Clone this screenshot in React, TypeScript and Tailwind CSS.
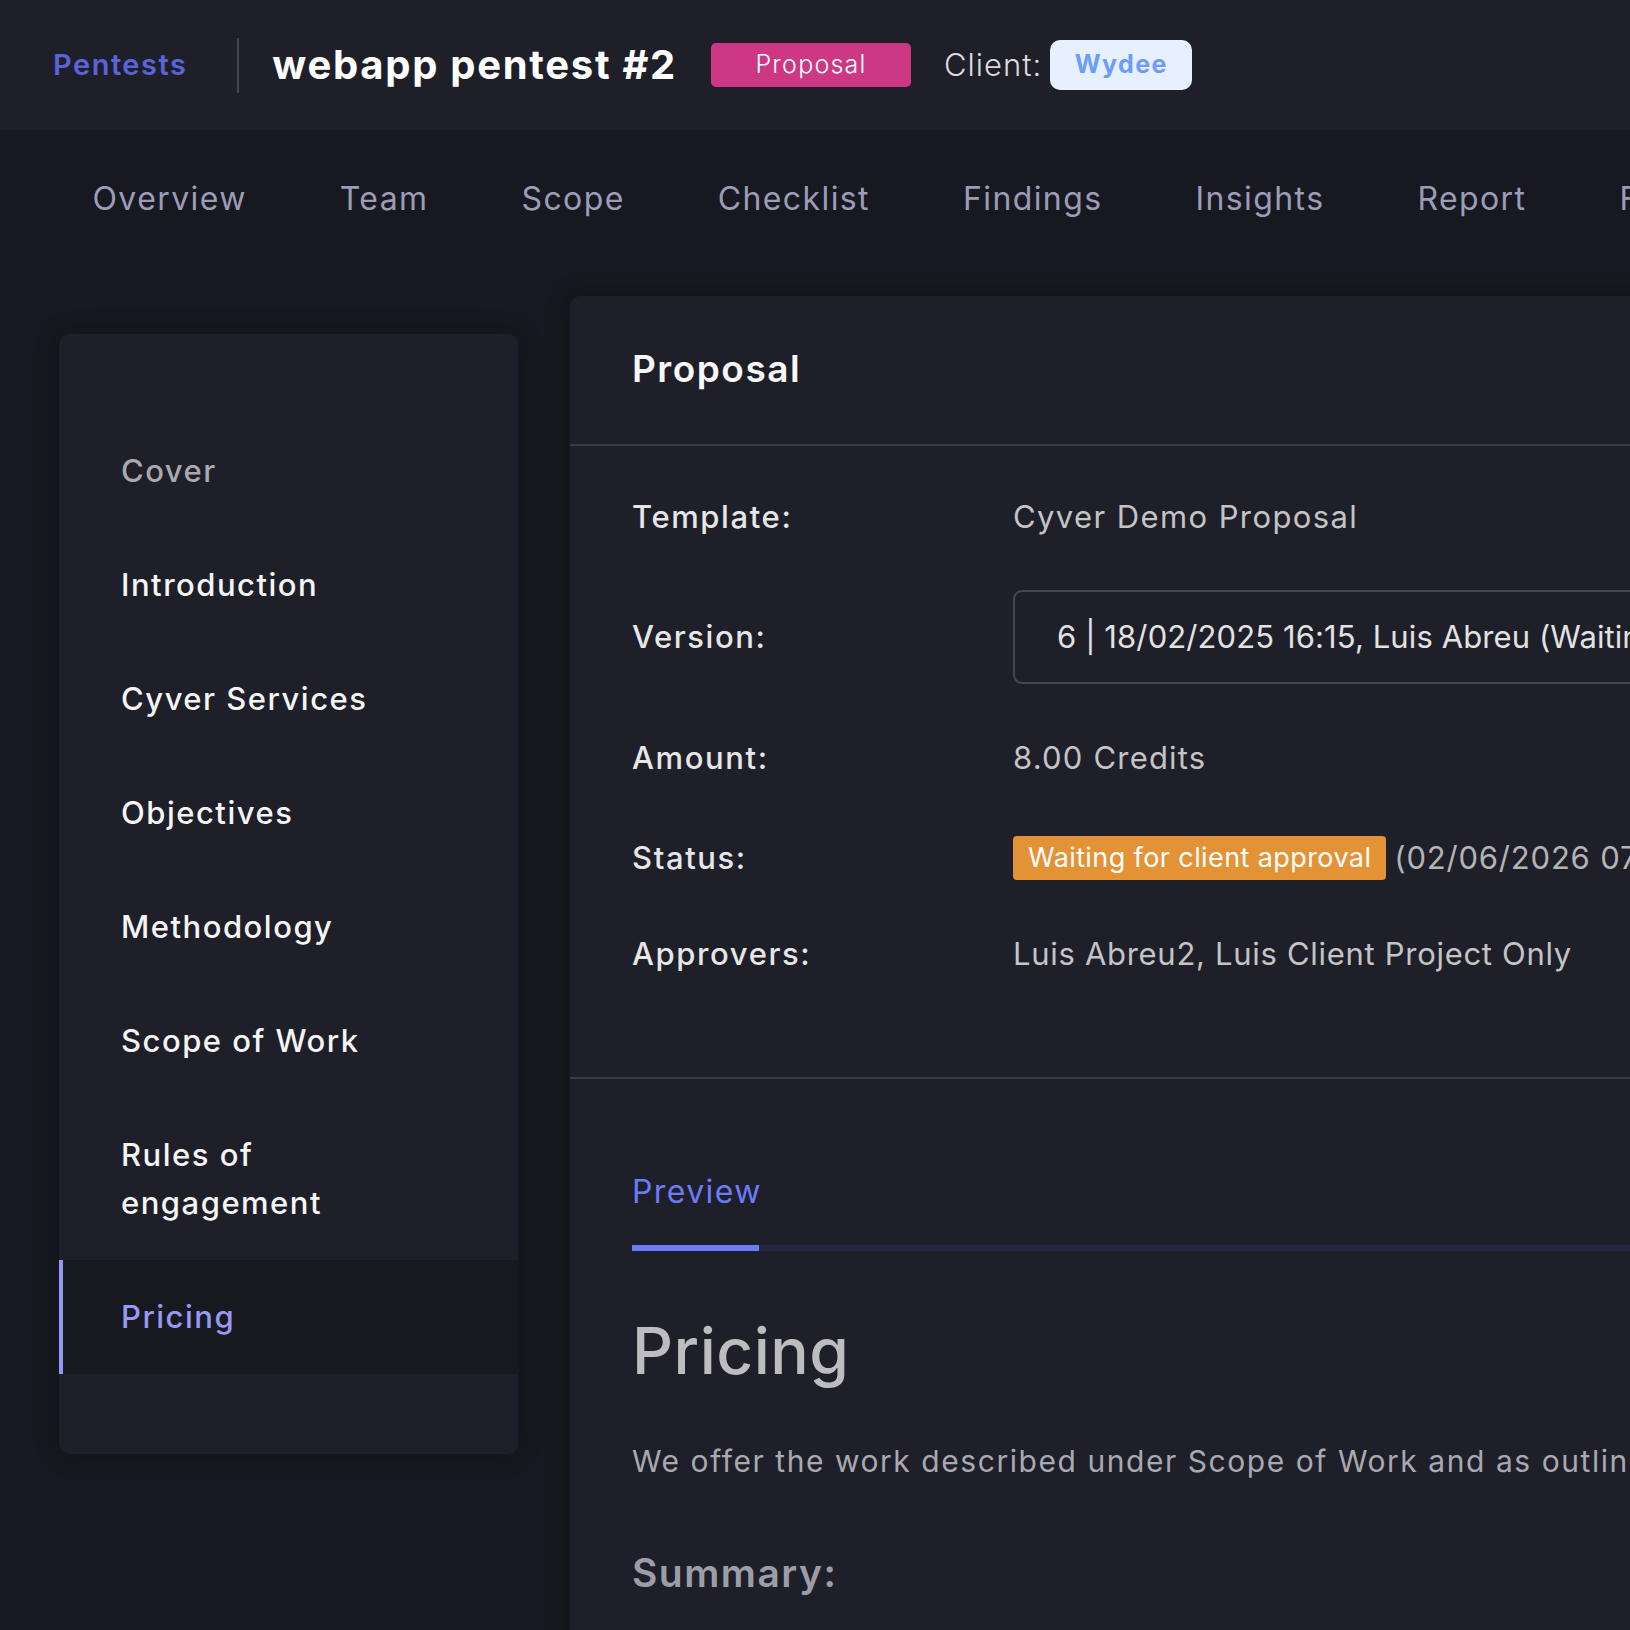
import { useState } from 'react'

const tabs = ['Overview', 'Team', 'Scope', 'Checklist', 'Findings', 'Insights', 'Report', 'Files']

const sections = [
  'Cover',
  'Introduction',
  'Cyver Services',
  'Objectives',
  'Methodology',
  'Scope of Work',
  'Rules of engagement',
  'Pricing',
]

export default function App() {
  const [active, setActive] = useState('Pricing')

  return (
    <div className="h-screen overflow-hidden bg-[#181820] font-['Inter','Noto_Sans',sans-serif] text-white">
      <header className="flex h-[130px] items-center whitespace-nowrap bg-[#1f1f2a] pl-[53px]">
        <span className="text-[29px] font-semibold tracking-[1.5px] text-[#5b63da]">Pentests</span>
        <div className="ml-[50px] h-[55px] w-[2px] bg-[#464654]" />
        <h1 className="ml-[33px] text-[40px] font-bold tracking-[1.7px]">webapp pentest #2</h1>
        <span className="ml-[34px] flex h-[44px] w-[200px] items-center justify-center rounded-[5px] bg-[#cd3784] text-[25px] font-light tracking-[1.2px]">
          Proposal
        </span>
        <span className="ml-[33px] text-[31px] font-light tracking-[1px] text-[#dcdcdc]">Client:</span>
        <span className="ml-[8px] flex h-[50px] w-[142px] items-center justify-center rounded-[10px] bg-[#e7f0ff] text-[25px] font-bold tracking-[1.4px] text-[#6c9cff]">
          Wydee
        </span>
      </header>

      <nav className="flex h-[166px] items-start whitespace-nowrap pl-[46px] pt-[45px]">
        {tabs.map((t) => (
          <button key={t} className="px-[46.5px] text-[32px] tracking-[1.4px] text-[#9b9db8]">
            {t}
          </button>
        ))}
      </nav>

      <div className="flex items-start pl-[59px]">
        <aside className="mt-[38px] w-[459px] shrink-0 rounded-[10px] bg-[#1f1f2a] py-[80px] shadow-[0_0_24px_rgba(0,0,0,0.25)]">
          {sections.map((s) => {
            const on = s === active
            return (
              <button
                key={s}
                onClick={() => setActive(s)}
                className={
                  'block w-full border-l-4 py-[33px] pl-[58px] pr-[100px] text-left text-[31px] font-medium leading-[48px] tracking-[1.5px] ' +
                  (on
                    ? 'border-[#9597f4] bg-[#18181f] text-[#9799f5]'
                    : s === 'Cover'
                      ? 'border-transparent text-[#a9a9b0]'
                      : 'border-transparent text-[#f5f5f5]')
                }
              >
                {s}
              </button>
            )
          })}
        </aside>

        <main className="ml-[52px] h-[1400px] flex-1 whitespace-nowrap rounded-tl-[10px] bg-[#1f1f2a] shadow-[0_0_24px_rgba(0,0,0,0.25)]">
          <div className="flex h-[150px] items-center border-b-2 border-[#393947] pl-[62px]">
            <h2 className="-mt-[3px] text-[37px] font-semibold tracking-[1.5px] text-[#f7f7f7]">Proposal</h2>
          </div>

          <div className="flex flex-col border-b-2 border-[#393947] pb-[100px] pl-[62px] pt-[48px] text-[31px]">
            <div className="flex h-[46px] items-center">
              <span className="w-[381px] font-medium tracking-[1.6px] text-[#e6e6e6]">Template:</span>
              <span className="tracking-[1.4px] text-[#c4c4c4]">Cyver Demo Proposal</span>
            </div>
            <div className="mt-[50px] flex h-[94px] items-center">
              <span className="w-[381px] font-medium tracking-[1.6px] text-[#e6e6e6]">Version:</span>
              <div className="flex h-[94px] w-[900px] items-center rounded-[9px] border-2 border-[#454555] pl-[42px] tracking-[0.1px] text-[#e2e2e2]">
                6 | 18/02/2025 16:15, Luis Abreu (Waiting for client approval)
              </div>
            </div>
            <div className="mt-[51px] flex h-[46px] items-center">
              <span className="w-[381px] font-medium tracking-[1.6px] text-[#e6e6e6]">Amount:</span>
              <span className="tracking-[1.2px] text-[#c4c4c4]">8.00 Credits</span>
            </div>
            <div className="mt-[55px] flex h-[44px] items-center">
              <span className="w-[381px] font-medium tracking-[1.6px] text-[#e6e6e6]">Status:</span>
              <span className="flex h-[44px] items-center rounded-[4px] bg-[#e39335] px-[15px] text-[27px] tracking-[0.4px] text-white">
                Waiting for client approval
              </span>
              <span className="ml-[8px] tracking-[0.8px] text-[#b4b4b4]">(02/06/2026 07:42)</span>
            </div>
            <div className="mt-[51px] flex h-[46px] items-center">
              <span className="w-[381px] font-medium tracking-[1.6px] text-[#e6e6e6]">Approvers:</span>
              <span className="tracking-[0.7px] text-[#c4c4c4]">Luis Abreu2, Luis Client Project Only</span>
            </div>
          </div>

          <div className="pl-[62px] pt-[90px]">
            <div className="flex flex-col">
              <span className="h-[46px] text-[32px] leading-[46px] tracking-[1.4px] text-[#6c7bf6]">Preview</span>
              <div className="mt-[30px] h-[6px] w-[1200px] bg-[#252740]">
                <div className="h-full w-[127px] bg-[#6c7bf6]" />
              </div>
            </div>

            <h3 className="mt-[60px] text-[64px] font-medium leading-[80px] tracking-[0.5px] text-[#bdbdc0]">Pricing</h3>
            <p className="mt-[47px] text-[30px] leading-[46px] tracking-[1.55px] text-[#a9a9b1]">
              We offer the work described under Scope of Work and as outlined in this proposal for the following
            </p>
            <h4 className="mt-[63px] text-[39px] font-semibold leading-[52px] tracking-[1.5px] text-[#9d9da8]">Summary:</h4>
          </div>
        </main>
      </div>
    </div>
  )
}
